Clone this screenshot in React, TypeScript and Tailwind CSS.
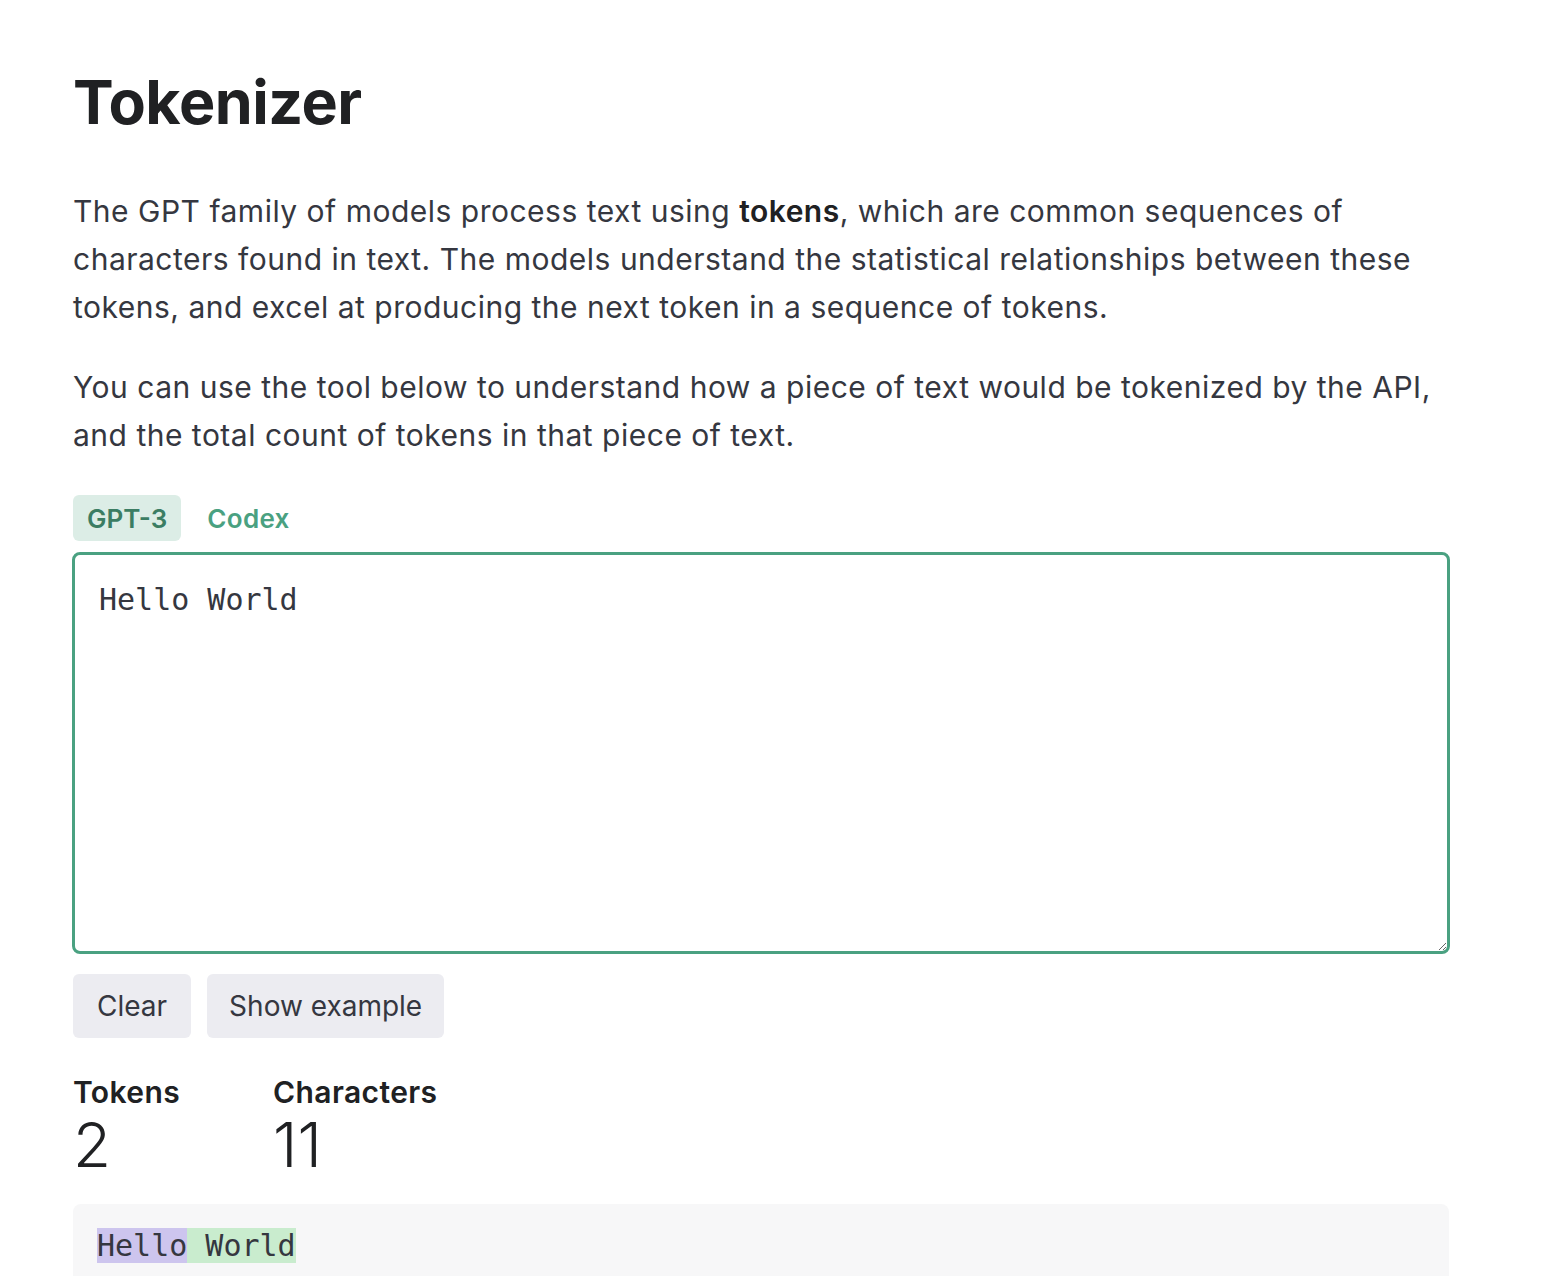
import React, { useState } from 'react';

const App: React.FC = () => {
  const [model, setModel] = useState<'gpt3' | 'codex'>('gpt3');
  const [text, setText] = useState('Hello World');

  return (
    <div className="min-h-screen bg-white font-['Inter',sans-serif] text-[#353740]">
      <div className="w-[1376px] ml-[73px] pt-[62px]">
        <h1 className="text-[61px] leading-[80px] font-bold text-[#202123] tracking-[-0.5px]">Tokenizer</h1>

        <p className="mt-[45px] text-[30px] leading-[48px] tracking-[0.5px] whitespace-nowrap">
          The GPT family of models process text using <b className="font-semibold text-[#202123]">tokens</b>, which are common sequences of
          <br />
          characters found in text. The models understand the statistical relationships between these
          <br />
          tokens, and excel at producing the next token in a sequence of tokens.
        </p>
        <p className="mt-[32px] text-[30px] leading-[48px] tracking-[0.5px] whitespace-nowrap">
          You can use the tool below to understand how a piece of text would be tokenized by the API,
          <br />
          and the total count of tokens in that piece of text.
        </p>

        {/* Model tabs */}
        <div className="mt-[36px] flex gap-[12px]">
          <button
            onClick={() => setModel('gpt3')}
            className={`h-[46px] px-[14px] rounded-[6px] text-[26px] font-semibold ${model === 'gpt3' ? 'bg-[#dcede6] text-[#3b7d63]' : 'text-[#4aa181]'}`}
          >
            GPT-3
          </button>
          <button
            onClick={() => setModel('codex')}
            className={`h-[46px] px-[14px] rounded-[6px] text-[26px] font-semibold tracking-[0.3px] ${model === 'codex' ? 'bg-[#dcede6] text-[#3b7d63]' : 'text-[#4aa181]'}`}
          >
            Codex
          </button>
        </div>

        <textarea
          value={text}
          onChange={(e) => setText(e.target.value)}
          className="mt-[11px] -ml-[1px] block w-[1378px] h-[402px] border-[3px] border-[#4aa181] rounded-[8px] px-[24px] py-[25px] font-['DejaVu_Sans_Mono',monospace] text-[30px] leading-[40px] text-[#353740] outline-none resize-y"
        />

        <div className="mt-[20px] flex gap-[16px]">
          <button onClick={() => setText('')} className="h-[64px] px-[24px] rounded-[6px] bg-[#ececf1] text-[28px] text-[#353740]">
            Clear
          </button>
          <button className="h-[64px] px-[22px] rounded-[6px] bg-[#ececf1] text-[28px] text-[#353740]">
            Show example
          </button>
        </div>

        <div className="mt-[36px] flex">
          <div className="w-[200px]">
            <div className="text-[30px] leading-[36px] font-semibold text-[#202123] tracking-[0.4px]">Tokens</div>
            <div className="mt-[2px] text-[62px] leading-[66px] font-light text-[#202123]">2</div>
          </div>
          <div>
            <div className="text-[30px] leading-[36px] font-semibold text-[#202123] tracking-[0.4px]">Characters</div>
            <div className="mt-[2px] text-[62px] leading-[66px] font-light text-[#202123]">{text.length}</div>
          </div>
        </div>

        <div className="mt-[26px] bg-[#f7f7f8] rounded-t-[8px] px-[24px] pt-[24px] pb-[40px] font-['DejaVu_Sans_Mono',monospace] text-[30px] leading-[36px] text-[#353740]">
          <span className="bg-[#cdc5ee]">Hello</span>
          <span className="bg-[#c9ecce]"> World</span>
        </div>
      </div>
    </div>
  );
};

export default App;
